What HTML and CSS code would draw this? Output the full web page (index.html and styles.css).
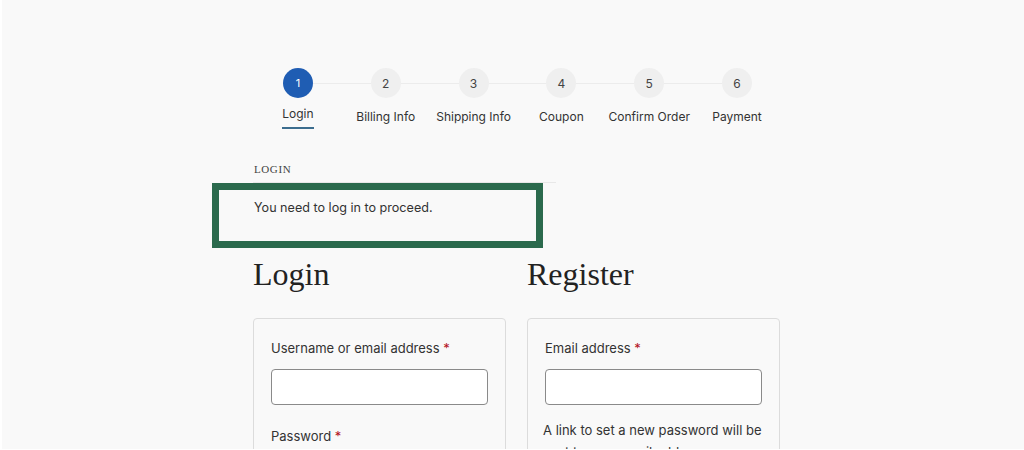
FILE: index.html
```html
<!DOCTYPE html>
<html lang="en">
<head>
  <meta charset="UTF-8">
  <title>Checkout - Login</title>
  <meta name="viewport" content="width=device-width, initial-scale=1.0">
  <link rel="stylesheet" href="styles.css">
</head>
<body>

  <div class="page">
    <ol class="steps">
      <li class="step active"><span class="num">1</span><span class="label">Login</span></li>
      <li class="step"><span class="num">2</span><span class="label">Billing Info</span></li>
      <li class="step"><span class="num">3</span><span class="label">Shipping Info</span></li>
      <li class="step"><span class="num">4</span><span class="label">Coupon</span></li>
      <li class="step"><span class="num">5</span><span class="label">Confirm Order</span></li>
      <li class="step"><span class="num">6</span><span class="label">Payment</span></li>
    </ol>

    <div class="section-title">Login</div>

    <div class="notice">You need to log in to proceed.</div>

    <div class="columns">
      <div class="col">
        <h2>Login</h2>
        <form class="card">
          <label>Username or email address <span class="req">*</span></label>
          <input type="text">
          <label class="next">Password <span class="req">*</span></label>
          <input type="password">
        </form>
      </div>
      <div class="col">
        <h2>Register</h2>
        <form class="card">
          <label>Email address <span class="req">*</span></label>
          <input type="email">
          <p class="hint">A link to set a new password will be sent to your email address.</p>
        </form>
      </div>
    </div>
  </div>

</body>
</html>
```

FILE: styles.css
```css
html {
  background: #fff;
}
body {
  margin: 0 0 0 2px;
  height: 449px;
  overflow: hidden;
  background: #f9f9f9;
  color: #333;
  font-family: Inter, "Noto Sans", sans-serif;
  font-size: 13px;
}
.page {
  width: 528px;
  margin-left: 251px;
  padding-top: 68px;
}

/* steps */
.steps {
  display: flex;
  list-style: none;
  margin: 0 0 0 1px;
  padding: 0;
}
.step {
  position: relative;
  width: 88px;
  display: flex;
  flex-direction: column;
  align-items: center;
}
.step:not(:last-child)::after {
  content: "";
  position: absolute;
  top: 15px;
  left: calc(50% + 15px);
  width: 58px;
  height: 1px;
  background: #ececec;
}
.num {
  width: 30px;
  height: 30px;
  border-radius: 50%;
  background: #efefef;
  color: #444;
  display: flex;
  align-items: center;
  justify-content: center;
  font-size: 12px;
}
.label {
  margin-top: 11px;
  font-size: 12px;
  line-height: 16px;
  white-space: nowrap;
}
.active .num {
  background: #1f5db3;
  color: #fff;
  font-size: 11px;
}
.active .label {
  margin-top: 8px;
  padding-bottom: 5px;
  border-bottom: 2px solid #3c6d8e;
}

/* notice */
.section-title {
  width: 302px;
  margin-top: 33px;
  padding: 0 0 6px 1px;
  border-bottom: 1px solid #e8e8e8;
  font-family: "Liberation Serif", serif;
  font-size: 11px;
  line-height: 14px;
  letter-spacing: 0.6px;
  text-transform: uppercase;
  color: #444;
}
.notice {
  box-sizing: border-box;
  width: 331px;
  height: 65px;
  margin-left: -41px;
  padding: 10px 0 0 35px;
  border: 7px solid #2b6a4d;
  font-size: 12.6px;
  line-height: 16px;
}

/* columns */
.columns {
  display: grid;
  grid-template-columns: 253px 253px;
  column-gap: 21px;
}
h2 {
  margin: 6px 0 24px;
  font-family: "Liberation Serif", serif;
  font-weight: normal;
  font-size: 32px;
  line-height: 40px;
  color: #222;
}
.card {
  margin: 0;
  height: 200px;
  padding: 21px 17px 0;
  border: 1px solid #dcdcdc;
  border-radius: 4px;
}
.card label {
  display: block;
  line-height: 16px;
  margin-bottom: 13px;
}
.card label.next {
  margin-top: 23px;
}
.req {
  color: #b3121b;
}
.card input {
  display: block;
  box-sizing: border-box;
  width: 100%;
  height: 36px;
  margin: 0;
  background: #fff;
  border: 1px solid #8a8a8a;
  border-radius: 4px;
}
.hint {
  margin: 14px 0 0 -2px;
  line-height: 22px;
}
```
